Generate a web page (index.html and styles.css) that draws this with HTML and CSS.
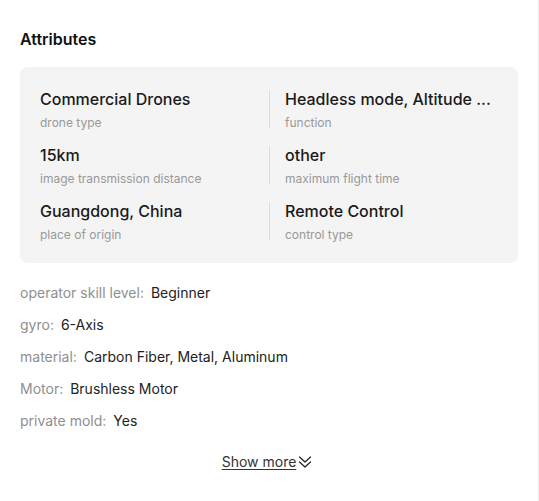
FILE: index.html
```html
<!DOCTYPE html>
<html>
<head>
<meta charset="utf-8">
<link rel="stylesheet" href="styles.css">
</head>
<body>
<div class="panel">
  <h2 class="title">Attributes</h2>
  <div class="card">
    <div class="cell"><div class="val">Commercial Drones</div><div class="lab">drone type</div></div>
    <div class="cell right"><div class="val">Headless mode, Altitude ...</div><div class="lab">function</div></div>
    <div class="cell"><div class="val">15km</div><div class="lab">image transmission distance</div></div>
    <div class="cell right"><div class="val">other</div><div class="lab">maximum flight time</div></div>
    <div class="cell"><div class="val">Guangdong, China</div><div class="lab">place of origin</div></div>
    <div class="cell right"><div class="val">Remote Control</div><div class="lab">control type</div></div>
  </div>
  <ul class="list">
    <li><span class="k">operator skill level:</span><span class="v">Beginner</span></li>
    <li><span class="k">gyro:</span><span class="v">6-Axis</span></li>
    <li><span class="k">material:</span><span class="v">Carbon Fiber, Metal, Aluminum</span></li>
    <li><span class="k">Motor:</span><span class="v">Brushless Motor</span></li>
    <li><span class="k">private mold:</span><span class="v">Yes</span></li>
  </ul>
  <div class="more">
    <a class="more-link">Show more</a>
    <svg class="chev" width="16" height="16" viewBox="0 0 16 16" fill="none" stroke="#222" stroke-width="1.2" stroke-linecap="round" stroke-linejoin="round"><path d="M2.5 3 L8 8 L13.5 3"/><path d="M2.5 8 L8 13 L13.5 8"/></svg>
  </div>
</div>
</body>
</html>
```
FILE: styles.css
```css
* { box-sizing: border-box; }
html, body { margin: 0; padding: 0; background: #fff; }
body {
  font-family: Inter, "Noto Sans", "Liberation Sans", sans-serif;
  color: #1a1a1a;
}
.panel {
  width: 539px;
  height: 501px;
  padding: 27px 20px 0 20px;
  border-right: 1px solid #ececec;
}
.title {
  margin: 0 0 16px 0;
  font-size: 16px;
  line-height: 24px;
  font-weight: 600;
  color: #111;
}
.card {
  background: #f4f4f4;
  border-radius: 8px;
  padding: 22px 20px 20px 20px;
  display: grid;
  grid-template-columns: 1fr 1fr;
  row-gap: 14px;
}
.cell {
  min-width: 0;
  position: relative;
}
.cell.right {
  padding-left: 16px;
}
.cell.right::before {
  content: "";
  position: absolute;
  left: 0;
  top: 1px;
  bottom: 3px;
  width: 1px;
  background: #dcdcdc;
}
.val {
  font-size: 16px;
  line-height: 20px;
  font-weight: 500;
  color: #1a1a1a;
  white-space: nowrap;
}
.lab {
  margin-top: 6px;
  font-size: 12px;
  line-height: 16px;
  color: #999;
}
.list {
  list-style: none;
  margin: 20px 0 0 0;
  padding: 0;
}
.list li {
  font-size: 14px;
  line-height: 20px;
  margin-bottom: 12px;
  display: flex;
  gap: 7px;
}
.k { color: #8f8f8f; }
.v { color: #222; }
.more {
  margin-top: 21px;
  display: flex;
  justify-content: center;
  align-items: center;
  gap: 1px;
  padding-right: 3px;
  font-size: 14px;
  line-height: 20px;
}
.more-link {
  color: #333;
  text-decoration: underline;
  text-underline-offset: 2px;
}
.chev { display: block; margin-top: 0; }
```
